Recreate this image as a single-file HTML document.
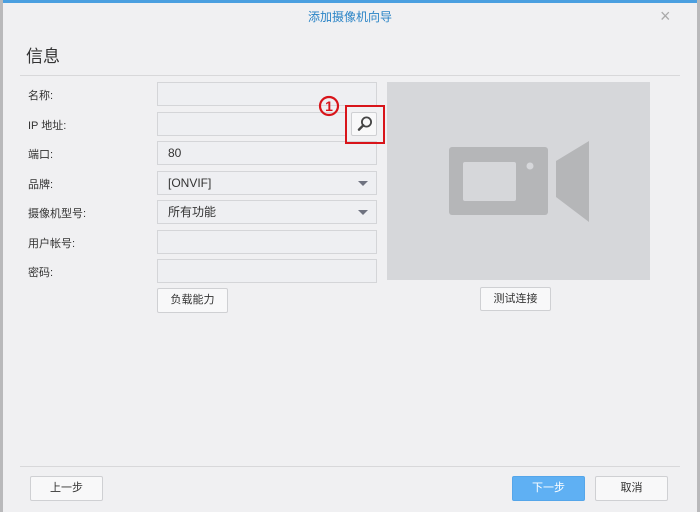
<!DOCTYPE html>
<html><head><meta charset="utf-8"><style>
*{margin:0;padding:0;box-sizing:border-box}
body{width:700px;height:512px;background:#f0f0f2;position:relative;overflow:hidden;font-family:"Liberation Sans","Noto Sans CJK SC",sans-serif;color:#333}
.a{position:absolute}
.lbl{position:absolute;left:28px;font-size:11px;color:#333}
.in{position:absolute;left:157px;width:220px;height:24px;background:#eeeff2;border:1px solid #d4d5d8;font-size:12px;padding-left:10px;line-height:22px;color:#333}
.dd::after{content:"";position:absolute;right:8px;top:9px;border-left:5px solid transparent;border-right:5px solid transparent;border-top:5px solid #6e7280}
.btn{position:absolute;background:#f8f8f9;border:1px solid #cfd0d3;border-radius:2px;font-size:11px;text-align:center;color:#333}
</style></head><body>
<div class="a" style="left:0;top:0;width:700px;height:3px;background:#4a9fe0"></div>
<div class="a" style="left:0;top:0;width:3px;height:512px;background:#b9b9bb"></div>
<div class="a" style="right:0;top:0;width:3px;height:512px;background:#b9b9bb"></div>
<div class="a" style="left:0;top:8px;width:700px;text-align:center;font-size:12px;color:#2a84c6">添加摄像机向导</div>
<div class="a" style="left:660px;top:6px;font-size:18px;color:#aaa;font-weight:300">×</div>
<div class="a" style="left:26px;top:42px;font-size:17px;color:#333">信息</div>
<div class="a" style="left:20px;top:75px;width:660px;height:1px;background:#d8d8da"></div>

<div class="lbl" style="top:87px">名称:</div>
<div class="lbl" style="top:117px">IP 地址:</div>
<div class="lbl" style="top:146px">端口:</div>
<div class="lbl" style="top:176px">品牌:</div>
<div class="lbl" style="top:205px">摄像机型号:</div>
<div class="lbl" style="top:235px">用户帐号:</div>
<div class="lbl" style="top:264px">密码:</div>

<div class="in" style="top:82px"></div>
<div class="in" style="top:112px;width:190px"></div>
<div class="in" style="top:141px">80</div>
<div class="in dd" style="top:171px">[ONVIF]</div>
<div class="in dd" style="top:200px">所有功能</div>
<div class="in" style="top:230px"></div>
<div class="in" style="top:259px"></div>

<div class="btn" style="left:351px;top:112px;width:26px;height:24px"></div>
<svg class="a" style="left:355px;top:114px" width="20" height="20" viewBox="0 0 20 20"><circle cx="11.5" cy="8" r="4.6" fill="none" stroke="#444" stroke-width="1.8"/><line x1="8.3" y1="11.3" x2="4" y2="15.6" stroke="#444" stroke-width="2.4" stroke-linecap="round"/></svg>
<div class="a" style="left:345px;top:105px;width:40px;height:39px;border:2px solid #d8141a"></div>
<svg class="a" style="left:318px;top:95px" width="22" height="22" viewBox="0 0 22 22"><circle cx="11" cy="11" r="9" fill="none" stroke="#d8141a" stroke-width="2.2"/><text x="11" y="16" text-anchor="middle" font-family="Liberation Sans" font-weight="bold" font-size="14" fill="#d8141a">1</text></svg>

<div class="btn" style="left:157px;top:288px;width:71px;height:25px;line-height:23px">负载能力</div>

<div class="a" style="left:387px;top:82px;width:263px;height:198px;background:#d6d7da"></div>
<svg class="a" style="left:387px;top:82px" width="263" height="198">
<rect x="62" y="65" width="99" height="68" rx="3" fill="#b5b6b8"/>
<rect x="76" y="80" width="53" height="39" rx="2" fill="#d6d7da"/>
<circle cx="143" cy="84" r="3.5" fill="#d6d7da"/>
<path d="M169 79 L202 59 L202 140 L169 115 Z" fill="#b5b6b8"/>
</svg>
<div class="btn" style="left:480px;top:287px;width:71px;height:24px;line-height:22px">测试连接</div>

<div class="a" style="left:20px;top:466px;width:660px;height:1px;background:#d8d8da"></div>
<div class="btn" style="left:30px;top:476px;width:73px;height:25px;line-height:23px">上一步</div>
<div class="btn" style="left:512px;top:476px;width:73px;height:25px;line-height:23px;background:#5fb0f3;border-color:#55a6ea;color:#fff">下一步</div>
<div class="btn" style="left:595px;top:476px;width:73px;height:25px;line-height:23px">取消</div>
</body></html>
